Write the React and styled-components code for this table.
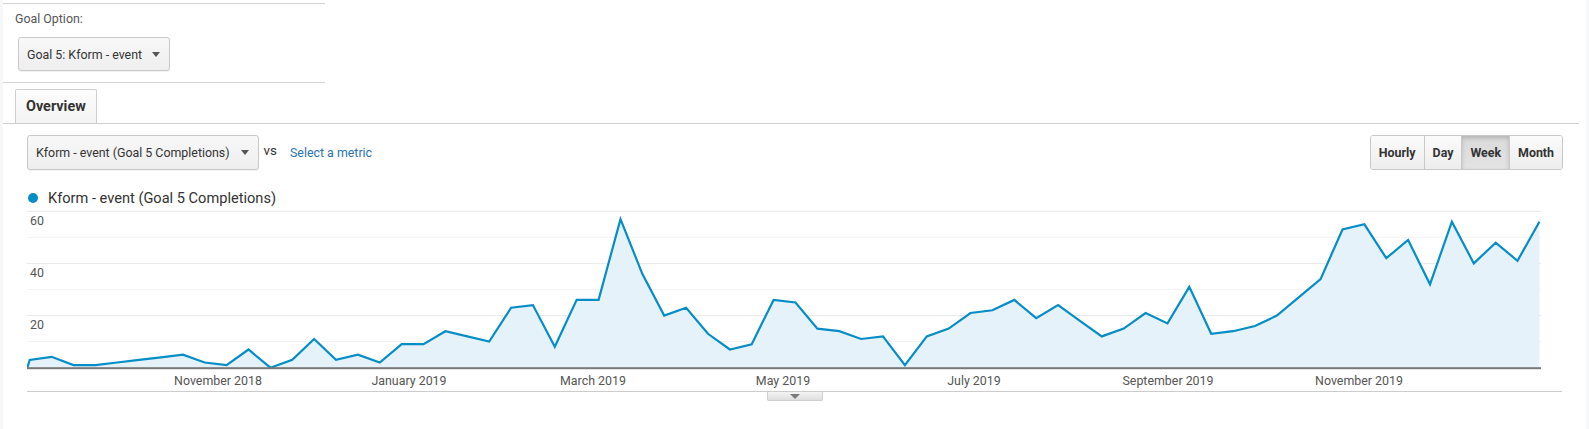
import React from 'react';
import styled, { createGlobalStyle } from 'styled-components';

const GlobalStyle = createGlobalStyle`
  html, body {
    margin: 0;
    padding: 0;
    background: #f6f7f9;
    font-family: Roboto, 'Liberation Sans', Arial, sans-serif;
    color: #333;
  }
`;

// weekly goal completions, first value is the partial week at the left edge
const WEEKS = [
  3, 4.2, 1, 1, 2, 3, 4, 5, 2, 1, 7, 0, 3, 11, 3, 5, 2, 9, 9, 14, 12, 10, 23,
  24, 8, 26, 26, 57, 36, 20, 23, 13, 7, 9, 26, 25, 15, 14, 11, 12, 1, 12, 15,
  21, 22, 26, 19, 24, 18, 12, 15, 21, 17, 31, 13, 14, 16, 20, 27, 34, 53, 55,
  42, 49, 32, 56, 40, 48, 41, 56,
];

const MONTHS = [
  { label: 'November 2018', x: 191 },
  { label: 'January 2019', x: 382 },
  { label: 'March 2019', x: 566 },
  { label: 'May 2019', x: 756 },
  { label: 'July 2019', x: 947 },
  { label: 'September 2019', x: 1141 },
  { label: 'November 2019', x: 1332 },
];

const PLOT_W = 1514;
const BASE = 161.7;
const UNIT = 2.607;
const STEP = 21.88;

const Shell = styled.div`
  margin: 0 3px;
  height: 429px;
  background: #fff;
  overflow: hidden;
`;

const GoalPanel = styled.div`
  width: 322px;
  margin-top: 3px;
  border-top: 1px solid #d4d4d4;
  border-bottom: 1px solid #d4d4d4;
  padding: 8px 0 11px 12px;
  box-sizing: border-box;
`;

const FieldLabel = styled.div`
  font-size: 12.4px;
  line-height: 14px;
  color: #555;
`;

const SelectButton = styled.div`
  display: inline-flex;
  align-items: center;
  gap: ${(p) => p.$gap || 10}px;
  height: ${(p) => p.$height || 34}px;
  margin-top: ${(p) => p.$top || 0}px;
  margin-left: ${(p) => p.$left || 0}px;
  padding: 0 9px 0 8px;
  box-sizing: border-box;
  border: 1px solid #c9c9c9;
  border-radius: 3px;
  background: linear-gradient(#f8f8f8, #eeeeee);
  box-shadow: 0 1px 1px rgba(0, 0, 0, 0.06);
  font-size: 12.4px;
  color: #333;
  white-space: nowrap;
`;

const Caret = styled.span`
  width: 0;
  height: 0;
  border-left: 4px solid transparent;
  border-right: 4px solid transparent;
  border-top: 5px solid #555;
`;

const TabStrip = styled.div`
  display: flex;
  margin: 6px 7px 0 0;
  padding-left: 12px;
  border-bottom: 1px solid #cfcfcf;
`;

const Tab = styled.div`
  height: 33px;
  padding: 0 10px;
  display: flex;
  align-items: center;
  border: 1px solid #cfcfcf;
  border-bottom: none;
  border-radius: 2px 2px 0 0;
  background: linear-gradient(#fdfdfd, #f3f3f3);
  font-size: 14.4px;
  font-weight: 700;
  color: #333;
`;

const Toolbar = styled.div`
  display: flex;
  justify-content: space-between;
  align-items: center;
  margin-top: 11px;
  padding: 0 23px 0 24px;
`;

const MetricGroup = styled.div`
  display: flex;
  align-items: center;
`;

const VsText = styled.span`
  margin: 0 13px 4px 5px;
  font-size: 13.4px;
  color: #333;
`;

const MetricLink = styled.span`
  font-size: 12.4px;
  color: #2a72b5;
`;

const Segmented = styled.div`
  display: flex;
  height: 35px;
  border: 1px solid #c9c9c9;
  border-radius: 3px;
  overflow: hidden;
  box-sizing: border-box;
`;

const SegButton = styled.div`
  display: flex;
  align-items: center;
  padding: 0 8px;
  font-size: 12.4px;
  font-weight: 700;
  color: #333;
  background: ${(p) =>
    p.$active ? 'linear-gradient(#d9d9d9, #e4e4e4)' : 'linear-gradient(#fbfbfb, #ededed)'};
  box-shadow: ${(p) => (p.$active ? 'inset 0 2px 4px rgba(0, 0, 0, 0.18)' : 'none')};
  & + & {
    border-left: 1px solid #c9c9c9;
  }
`;

const Legend = styled.div`
  display: flex;
  align-items: center;
  gap: 10px;
  margin-top: 20px;
  padding-left: 25px;
  font-size: 14.6px;
  line-height: 16px;
  color: #333;
`;

const LegendDot = styled.span`
  width: 10px;
  height: 10px;
  border-radius: 50%;
  background: #058dc7;
`;

const ChartFrame = styled.div`
  margin: 0 24px 0 24px;
  border-bottom: 1px solid #cccccc;
  svg {
    display: block;
  }
`;

const ExpandHandle = styled.div`
  width: 56px;
  height: 9px;
  margin: 0 auto;
  display: flex;
  justify-content: center;
  padding-top: 2px;
  box-sizing: border-box;
  border: 1px solid #cfcfcf;
  border-top: none;
  border-radius: 0 0 2px 2px;
  background: linear-gradient(#f4f4f4, #dedede);

  &::after {
    content: '';
    border-left: 5px solid transparent;
    border-right: 5px solid transparent;
    border-top: 5px solid #7a7a7a;
  }
`;

const GoalChart = () => {
  const pts = [[0.3, BASE]].concat(
    WEEKS.map((v, i) => [2.7 + i * STEP, BASE - v * UNIT])
  );
  const line = pts.map(([x, y]) => `${x.toFixed(1)},${y.toFixed(1)}`).join(' ');
  const last = pts[pts.length - 1][0];
  const area = `${line} ${last.toFixed(1)},${BASE} 0.3,${BASE}`;
  const grid = [60, 50, 40, 30, 20, 10];

  return (
    <svg width={PLOT_W + 21} height={185}>
      {grid.map((g) => (
        <line
          key={g}
          x1={0}
          x2={PLOT_W}
          y1={BASE - g * UNIT}
          y2={BASE - g * UNIT}
          stroke={g % 20 === 0 ? '#e8e8e8' : '#f3f3f3'}
          strokeWidth={1}
        />
      ))}
      <polygon points={area} fill='#e6f2f9' />
      <polyline
        points={line}
        fill='none'
        stroke='#058dc7'
        strokeWidth={2.2}
        strokeLinejoin='miter'
      />
      <rect x={0} y={BASE - 0.5} width={PLOT_W} height={2} fill='#777' />
      {[60, 40, 20].map((g) => (
        <text
          key={g}
          x={3}
          y={BASE - g * UNIT + 13.5}
          fontSize={12.4}
          fill='#555'
          fontFamily='Roboto, sans-serif'
        >
          {g}
        </text>
      ))}
      {MONTHS.map((m) => (
        <text
          key={m.label}
          x={m.x}
          y={178.5}
          fontSize={12.4}
          fill='#555'
          textAnchor='middle'
          fontFamily='Roboto, sans-serif'
        >
          {m.label}
        </text>
      ))}
    </svg>
  );
};

const App = () => {
  return (
    <>
      <GlobalStyle />
      <Shell>
        <GoalPanel>
          <FieldLabel>Goal Option:</FieldLabel>
          <SelectButton $top={11} $left={3}>
            Goal 5: Kform - event
            <Caret />
          </SelectButton>
        </GoalPanel>

        <TabStrip>
          <Tab>Overview</Tab>
        </TabStrip>

        <Toolbar>
          <MetricGroup>
            <SelectButton $height={35} $gap={11}>
              Kform - event (Goal 5 Completions)
              <Caret />
            </SelectButton>
            <VsText>vs</VsText>
            <MetricLink>Select a metric</MetricLink>
          </MetricGroup>
          <Segmented>
            <SegButton>Hourly</SegButton>
            <SegButton>Day</SegButton>
            <SegButton $active>Week</SegButton>
            <SegButton>Month</SegButton>
          </Segmented>
        </Toolbar>

        <Legend>
          <LegendDot />
          Kform - event (Goal 5 Completions)
        </Legend>

        <ChartFrame>
          <GoalChart />
        </ChartFrame>
        <ExpandHandle />
      </Shell>
    </>
  );
};

export default App;
